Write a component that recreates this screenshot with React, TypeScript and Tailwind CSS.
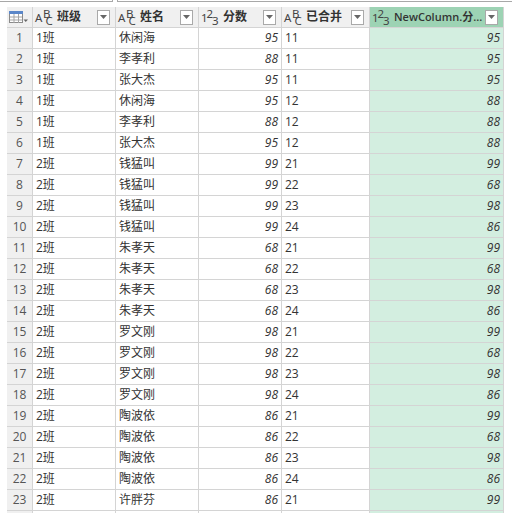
const rows: [string, string, number, number, number][] = [
  ["1班", "休闲海", 95, 11, 95],
  ["1班", "李孝利", 88, 11, 95],
  ["1班", "张大杰", 95, 11, 95],
  ["1班", "休闲海", 95, 12, 88],
  ["1班", "李孝利", 88, 12, 88],
  ["1班", "张大杰", 95, 12, 88],
  ["2班", "钱猛叫", 99, 21, 99],
  ["2班", "钱猛叫", 99, 22, 68],
  ["2班", "钱猛叫", 99, 23, 98],
  ["2班", "钱猛叫", 99, 24, 86],
  ["2班", "朱孝天", 68, 21, 99],
  ["2班", "朱孝天", 68, 22, 68],
  ["2班", "朱孝天", 68, 23, 98],
  ["2班", "朱孝天", 68, 24, 86],
  ["2班", "罗文刚", 98, 21, 99],
  ["2班", "罗文刚", 98, 22, 68],
  ["2班", "罗文刚", 98, 23, 98],
  ["2班", "罗文刚", 98, 24, 86],
  ["2班", "陶波依", 86, 21, 99],
  ["2班", "陶波依", 86, 22, 68],
  ["2班", "陶波依", 86, 23, 98],
  ["2班", "陶波依", 86, 24, 86],
  ["2班", "许胖芬", 86, 21, 99],
];

const font = { fontFamily: '"Open Sans","Noto Sans CJK SC",sans-serif' };

function Abc() {
  return (
    <svg width="20" height="20" viewBox="0 0 20 20" className="shrink-0 overflow-visible" fill="#444" fontSize="11.5" fontFamily="Noto Sans">
      <text>
        <tspan x="0" y="15">A</tspan>
        <tspan x="8" y="10.5">B</tspan>
        <tspan x="10.5" y="18">C</tspan>
      </text>
    </svg>
  );
}

function Num() {
  return (
    <svg width="20" height="20" viewBox="0 0 20 20" className="shrink-0 overflow-visible" fill="#444" fontSize="11.5" fontFamily="Noto Sans">
      <text>
        <tspan x="0" y="15">1</tspan>
        <tspan x="5.5" y="10.5">2</tspan>
        <tspan x="11" y="18">3</tspan>
      </text>
    </svg>
  );
}

function Drop() {
  return (
    <span className="flex items-center justify-center w-[13px] h-[15px] shrink-0 bg-white border border-[#a9a9a9]">
      <svg width="7" height="4" viewBox="0 0 7 4"><path d="M0 0H7L3.5 4Z" fill="#666" /></svg>
    </span>
  );
}

function Head({ icon, label, w, green }: { icon: "a" | "n"; label: string; w: string; green?: boolean }) {
  return (
    <div className={`${w} h-full flex items-center pl-[2px] pr-[5px] shrink-0 border-r border-[#d4d4d4] ${green ? "bg-[#9dd3b4]" : ""}`}>
      {icon === "a" ? <Abc /> : <Num />}
      <span className={`ml-[2px] flex-1 min-w-0 whitespace-nowrap text-[#333] ${green ? "text-[11px]" : "text-[12px]"} font-semibold`}>{label}</span>
      <Drop />
    </div>
  );
}

export default function App() {
  return (
    <div className="w-[512px] h-[513px] overflow-hidden bg-white" style={font}>
      <div className="h-[7px] flex">
        <div className="w-[113px] h-[2px] border-b border-r border-[#a8a8a8]" />
        <div className="w-[4px]" />
        <div className="flex-1 h-[2px] border-b border-l border-[#a8a8a8]" />
      </div>
      <div className="ml-[7px] w-[497px]">
        <div className="flex h-[21px] bg-[#f0f0f0] border-b border-[#d4d4d4]">
          <div className="w-[26px] h-full shrink-0 flex items-center pl-[2px] border-r border-[#d4d4d4]">
            <svg width="20" height="13" viewBox="0 0 20 13">
              <rect x="0.5" y="0.5" width="13" height="11" fill="#fff" stroke="#8a8a8a" />
              <rect x="0" y="0" width="14" height="3" fill="#5b87c9" />
              <path d="M5 3V12M9.5 3V12M1 6H13M1 9H13" stroke="#a5a5a5" />
              <path d="M14.5 8.5H19L16.75 11Z" fill="#666" />
            </svg>
          </div>
          <Head icon="a" label="班级" w="w-[83px]" />
          <Head icon="a" label="姓名" w="w-[83px]" />
          <Head icon="n" label="分数" w="w-[83px]" />
          <Head icon="a" label="已合并" w="w-[88px]" />
          <Head icon="n" label="NewColumn.分..." w="w-[134px]" green />
        </div>
        {rows.map((r, i) => (
          <div key={i} className="flex h-[21px] border-b border-[#d4d4d4] text-[12px] text-[#333]">
            <div className="w-[26px] shrink-0 bg-[#f0f0f0] border-r border-[#d4d4d4] text-center text-[#555] leading-[20px]">{i + 1}</div>
            <div className="w-[83px] shrink-0 border-r border-[#d4d4d4] pl-[3px] leading-[20px]">{r[0]}</div>
            <div className="w-[83px] shrink-0 border-r border-[#d4d4d4] pl-[3px] leading-[20px]">{r[1]}</div>
            <div className="w-[83px] shrink-0 border-r border-[#d4d4d4] pr-[3px] text-right italic leading-[20px]">{r[2]}</div>
            <div className="w-[88px] shrink-0 border-r border-[#d4d4d4] pl-[3px] leading-[20px]">{r[3]}</div>
            <div className="w-[134px] shrink-0 bg-[#d3eee0] border-r border-[#d4d4d4] pr-[3px] text-right italic leading-[20px]">{r[4]}</div>
          </div>
        ))}
        <div className="flex h-[2px]">
          <div className="w-[26px] bg-[#f0f0f0] border-r border-[#d4d4d4]" />
          <div className="w-[83px] border-r border-[#d4d4d4]" />
          <div className="w-[83px] border-r border-[#d4d4d4]" />
          <div className="w-[83px] border-r border-[#d4d4d4]" />
          <div className="w-[88px] border-r border-[#d4d4d4]" />
          <div className="w-[134px] bg-[#d3eee0] border-r border-[#d4d4d4]" />
        </div>
      </div>
    </div>
  );
}
